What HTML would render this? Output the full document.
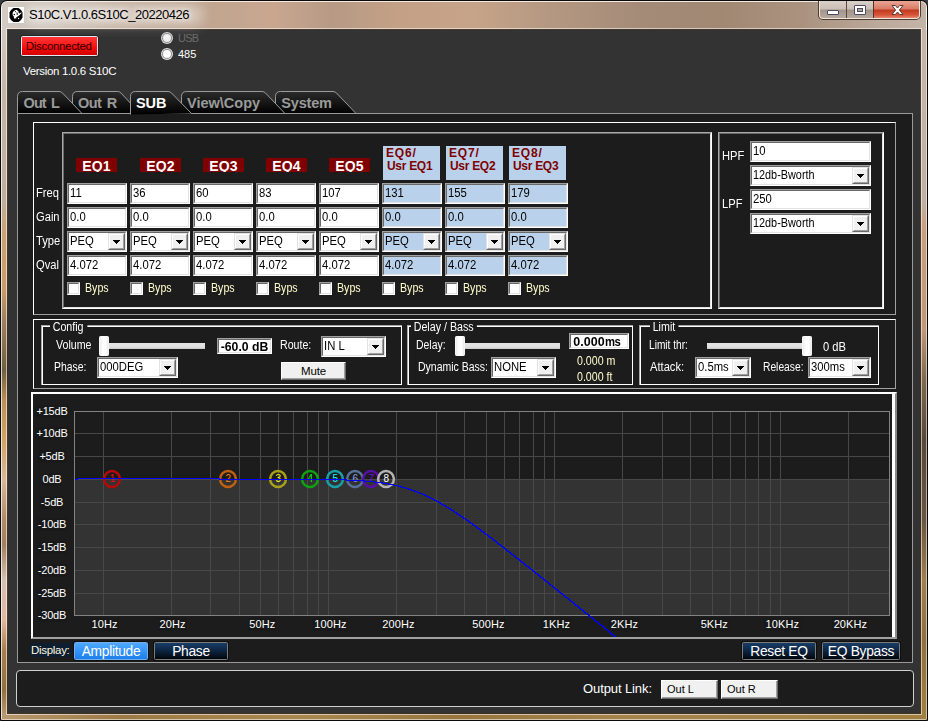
<!DOCTYPE html><html><head><meta charset="utf-8"><title>S10C</title><style>
*{box-sizing:border-box;margin:0;padding:0}
html,body{width:928px;height:721px;overflow:hidden;background:#3c3c40}
body{font-family:"Liberation Sans",sans-serif;font-size:12px;color:#fff;position:relative}
.a{position:absolute}
.t{position:absolute;white-space:nowrap;line-height:1}
/* window frame */
#frame{left:0;top:0;width:928px;height:721px;border-radius:7px 7px 2px 2px;background:#0c0a08;overflow:hidden}
#glass{left:1px;top:1px;width:926px;height:719px;border-radius:6px 6px 1px 1px;background:#f3ebe3}
#glass2{left:2px;top:2px;width:924px;height:717px;border-radius:5px 5px 0 0}
#client{left:8px;top:30px;width:912px;height:683px;background:#333}
/* classic controls */
.inp{position:absolute;background:#fff;border:1px solid;border-color:#a0a0a0 #fff #fff #a0a0a0;color:#000}
.inp:before{content:"";position:absolute;left:0;top:0;right:0;bottom:0;border:1px solid;border-color:#696969 #e3e3e3 #e3e3e3 #696969}
.inp span{position:absolute;left:2px;top:3px;font-size:12px;line-height:1;white-space:nowrap;transform:scaleX(.94);transform-origin:0 0}
.blue{background:#b9d1ea}
.dd{position:absolute;right:1px;top:1px;width:17px;height:17px;background:#f0f0f0;border:1px solid;border-color:#e3e3e3 #696969 #696969 #e3e3e3}
.dd:before{content:"";position:absolute;left:0;top:0;right:0;bottom:0;border:1px solid;border-color:#fff #a0a0a0 #a0a0a0 #fff}
.dd:after{content:"";position:absolute;left:4px;top:6px;width:7px;height:4px;background:linear-gradient(#000,#000) 0 0/7px 1px no-repeat,linear-gradient(#000,#000) 1px 1px/5px 1px no-repeat,linear-gradient(#000,#000) 2px 2px/3px 1px no-repeat,linear-gradient(#000,#000) 3px 3px/1px 1px no-repeat}
.cb{position:absolute;width:13px;height:13px;background:#fff;border:1px solid;border-color:#a0a0a0 #fff #fff #a0a0a0}
.cb:before{content:"";position:absolute;left:0;top:0;right:0;bottom:0;border:1px solid;border-color:#696969 #e3e3e3 #e3e3e3 #696969}
.lbl{font-size:12px;color:#fff;transform:scaleX(.93);transform-origin:0 0}
.byps{font-size:12px;color:#ffffd0;transform:scaleX(.885);transform-origin:0 0}
.eqh{position:absolute;background:#800000;color:#fff;font-weight:bold;font-size:14px;text-align:center;line-height:16px;height:14px;overflow:hidden;letter-spacing:0.1px}
.eqh2{position:absolute;background:#b9d1ea;color:#800000;font-weight:bold;font-size:12px;line-height:13px;width:57px;height:34px;padding:1px 0 0 3px;white-space:nowrap;letter-spacing:0.85px}
.eqh2 i{font-style:normal;letter-spacing:-0.3px;margin-left:1px}
.inp u{text-decoration:none;font-size:12px;letter-spacing:-0.8px;margin-left:0.5px}
.fs{position:absolute;border:1px solid #a8a8a8}
.fs:before{content:"";position:absolute;left:0;top:0;right:-1px;bottom:-1px;border:1px solid #fff}
.fs b{position:absolute;top:-5px;background:#1c1c1c;font-weight:normal;font-size:12px;line-height:12px;padding:0 4px 0 3px;z-index:2;transform:scaleX(.89);transform-origin:0 0}
</style></head><body>
<div id="frame" class="a"></div><div id="glass" class="a"></div>
<div id="glass2" class="a" style="background:linear-gradient(90deg,#d3cbc4 0px,#c9bdb2 60px,#c0aa99 130px,#bfa590 200px,#c9a78f 270px,#b79a85 330px,#c4a186 400px,#c6a489 470px,#b29680 560px,#a48b78 640px,#a18873 720px,#aa927f 800px,#bcaa9b 880px,#c4b4a8 924px)"></div>
<div class="a" style="left:1px;top:30px;width:7px;height:690px;background:linear-gradient(180deg,#d0c8c0 0,#c4b6a8 60px,#c0ae9c 170px,#c8a478 200px,#c89c68 260px,#a08060 290px,#706040 340px,#b89058 370px,#d0a468 410px,#d8b898 450px,#b08a68 490px,#a08060 515px,#d8c0b0 550px,#e0b8a0 590px,#a88050 620px,#907040 660px,#b89870 685px)"></div>
<div class="a" style="left:920px;top:30px;width:7px;height:690px;background:linear-gradient(180deg,#c6b6aa 0,#c2b0a2 170px,#c8a080 200px,#c09878 300px,#806850 350px,#584838 410px,#6a5540 490px,#a08050 550px,#907040 610px,#a08040 685px)"></div>
<div class="a" style="left:1px;top:713px;width:926px;height:7px;background:linear-gradient(90deg,#b89870 0,#9c7a45 120px,#a98850 300px,#97753f 460px,#a5844c 620px,#a38147 800px,#a08040 924px)"></div>
<div class="a" style="left:1px;top:8px;width:1px;height:711px;background:rgba(255,255,255,.72)"></div>
<div class="a" style="left:926px;top:8px;width:1px;height:711px;background:rgba(255,255,255,.55)"></div>
<div class="a" style="left:2px;top:719px;width:924px;height:1px;background:rgba(255,255,255,.55)"></div>
<div class="a" style="left:6px;top:28px;width:916px;height:687px;background:transparent;border:1px solid rgba(255,255,255,.55)"></div>
<div class="a" style="left:7px;top:29px;width:914px;height:685px;background:transparent;border:1px solid rgba(40,30,20,.8)"></div>
<div id="client" class="a"></div>
<div class="a" style="left:26px;top:4px;width:178px;height:22px;border-radius:11px;background:rgba(255,255,255,.38);filter:blur(6px)"></div>
<svg class="a" style="left:8px;top:7px" width="16" height="16" viewBox="0 0 16 16"><rect width="16" height="16" fill="#fff"/><path d="M5.500 1h5l2.500 2 1.500 2.500v5L13 13l-2.500 2h-5L3 13 1.500 10.500v-5L3 3z" fill="#000"/><path d="M8.500 2.800l1.800 1.400.7 2.200 2.600-1.100-.2.900-1.800 1.700-1.500 1.400-1.600 1-1.200 1.500-1.200-.2-.3-2.200-1.200-1.500V5.700l1-1.500 1.500-1z" fill="#fff"/><circle cx="7.400" cy="4.600" r=".55" fill="#000"/><circle cx="6.300" cy="7.500" r=".7" fill="#000"/><path d="M8.600 5.300l1.100.4.100 1.900-1 .3z" fill="#000"/><circle cx="10.600" cy="11.500" r=".65" fill="#fff"/><circle cx="8.300" cy="11.600" r=".35" fill="#999"/></svg>
<div class="t" style="left:29px;top:8px;font-size:13px;color:#000;letter-spacing:-0.47px;text-shadow:0 0 6px #fff,0 0 10px rgba(255,255,255,.8)">S10C.V1.0.6S10C_20220426</div>
<div class="a" style="left:818px;top:1px;width:103px;height:19px;border-radius:0 0 5px 5px;background:#4a3c32"></div>
<div class="a" style="left:819px;top:1px;width:101px;height:18px;border-radius:0 0 4px 4px;background:#f2e6dc"></div>
<div class="a" style="left:820px;top:1px;width:26px;height:17px;border-radius:0 0 0 3px;background:linear-gradient(180deg,#d9d0c9 0,#cbbfb6 8px,#a4958a 9px,#b6a89c 17px)"></div>
<div class="a" style="left:847px;top:1px;width:26px;height:17px;background:linear-gradient(180deg,#d9d0c9 0,#cbbfb6 8px,#a4958a 9px,#b6a89c 17px)"></div>
<div class="a" style="left:846px;top:1px;width:1px;height:17px;background:#5a4a40"></div>
<div class="a" style="left:873px;top:1px;width:1px;height:17px;background:#5a3028"></div>
<div class="a" style="left:874px;top:1px;width:45px;height:17px;border-radius:0 0 3px 0;background:linear-gradient(180deg,#e9a593 0,#d97b66 8px,#c13a20 9px,#d8553a 14px,#e4876c 17px)"></div>
<div class="a" style="left:827px;top:10px;width:12px;height:5px;background:#fff;border:1px solid #4a4a60;border-radius:1px"></div>
<div class="a" style="left:854px;top:5px;width:12px;height:10px;background:#fff;border:1px solid #4a4a60;border-radius:1px"></div>
<div class="a" style="left:857px;top:8px;width:6px;height:4px;background:#b4a59a;border:1px solid #4a4a60"></div>
<svg class="a" style="left:891px;top:4px" width="13" height="12" viewBox="0 0 13 12"><path d="M1 1.500h3.400L6.500 4 8.600 1.500H12L8.400 6 12 10.500H8.600L6.500 8 4.400 10.500H1L4.600 6z" fill="#fff" stroke="#5c3838" stroke-width="1" stroke-linejoin="round"/></svg>
<div class="a" style="left:20px;top:35px;width:79px;height:22px;background:#242424;border-radius:3px"></div>
<div class="a" style="left:21px;top:36px;width:77px;height:20px;background:#dfe8f4;border-radius:2px"></div>
<div class="a" style="left:22px;top:37px;width:75px;height:18px;background:linear-gradient(180deg,#ff3434 0,#ff2020 35%,#f40808 65%,#d40000 100%)"></div>
<div class="t" style="left:25.8px;top:41px;font-size:11.5px;color:#2c0000;letter-spacing:-0.32px">Disconnected</div>
<div class="t" style="left:23px;top:66px;font-size:11.5px;color:#fff;letter-spacing:-0.33px">Version 1.0.6 S10C</div>
<div class="a" style="left:161px;top:32px;width:12px;height:12px;border-radius:6px;background:#d6d6d6"></div>
<div class="a" style="left:162px;top:33px;width:10px;height:10px;border-radius:5px;background:#8c8c8c"></div>
<div class="a" style="left:163px;top:34px;width:8px;height:8px;border-radius:4px;background:radial-gradient(circle at 45% 40%,#f6f6f6 0,#ececec 60%,#dadada 100%)"></div>
<div class="t" style="left:178px;top:33px;font-size:11px;color:#6d6d6d;letter-spacing:-0.75px">USB</div>
<div class="a" style="left:161px;top:48px;width:12px;height:12px;border-radius:6px;background:#e2e2e2"></div>
<div class="a" style="left:162px;top:49px;width:10px;height:10px;border-radius:5px;background:#8e8e8e"></div>
<div class="a" style="left:163px;top:50px;width:8px;height:8px;border-radius:4px;background:radial-gradient(circle at 45% 40%,#fff 0,#fdfdfd 60%,#e8e8e8 100%)"></div>
<div class="t" style="left:178px;top:49px;font-size:11px;color:#fff;letter-spacing:0px">485</div>
<div class="a" style="left:17px;top:113px;width:896px;height:550px;background:#1c1c1c;border:1px solid #9a9a9a"></div>
<svg class="a" style="left:0;top:0" width="928" height="130"><defs><linearGradient id="tg275" x1="0" y1="0" x2="0" y2="1"><stop offset="0" stop-color="#2c2c2c"/><stop offset="1" stop-color="#000"/></linearGradient></defs><path d="M275.5 113.5 V96.5 Q275.5 91.5 280.5 91.5 H333.0 Q335.0 91.5 336.5 93.0 L356.0 113.5 L275.5 113.5 Z" fill="url(#tg275)" stroke="none"/><path d="M275.5 113.5 V96.5 Q275.5 91.5 280.5 91.5 H333.0 Q335.0 91.5 336.5 93.0 L356.0 113.5" fill="none" stroke="#9a9a9a" stroke-width="1"/><path d="M275.5 113.5 H356.0" stroke="#9a9a9a" stroke-width="1"/></svg>
<div class="t" style="left:281.3px;top:96px;font-size:14.5px;font-weight:bold;color:#9a9a9a;letter-spacing:-0.20px;word-spacing:0.0px">System</div>
<svg class="a" style="left:0;top:0" width="928" height="130"><defs><linearGradient id="tg181" x1="0" y1="0" x2="0" y2="1"><stop offset="0" stop-color="#2c2c2c"/><stop offset="1" stop-color="#000"/></linearGradient></defs><path d="M181.5 113.5 V96.5 Q181.5 91.5 186.5 91.5 H262.0 Q264.0 91.5 265.5 93.0 L285.0 113.5 L181.5 113.5 Z" fill="url(#tg181)" stroke="none"/><path d="M181.5 113.5 V96.5 Q181.5 91.5 186.5 91.5 H262.0 Q264.0 91.5 265.5 93.0 L285.0 113.5" fill="none" stroke="#9a9a9a" stroke-width="1"/><path d="M181.5 113.5 H285.0" stroke="#9a9a9a" stroke-width="1"/></svg>
<div class="t" style="left:187.0px;top:96px;font-size:14.5px;font-weight:bold;color:#9a9a9a;letter-spacing:0.00px;word-spacing:0.0px">View\Copy</div>
<svg class="a" style="left:0;top:0" width="928" height="130"><defs><linearGradient id="tg72" x1="0" y1="0" x2="0" y2="1"><stop offset="0" stop-color="#2c2c2c"/><stop offset="1" stop-color="#000"/></linearGradient></defs><path d="M72.5 113.5 V96.5 Q72.5 91.5 77.5 91.5 H117.5 Q119.5 91.5 121.0 93.0 L140.0 113.5 L72.5 113.5 Z" fill="url(#tg72)" stroke="none"/><path d="M72.5 113.5 V96.5 Q72.5 91.5 77.5 91.5 H117.5 Q119.5 91.5 121.0 93.0 L140.0 113.5" fill="none" stroke="#9a9a9a" stroke-width="1"/><path d="M72.5 113.5 H140.0" stroke="#9a9a9a" stroke-width="1"/></svg>
<div class="t" style="left:78.0px;top:96px;font-size:14.5px;font-weight:bold;color:#9a9a9a;letter-spacing:-0.55px;word-spacing:2.0px">Out R</div>
<svg class="a" style="left:0;top:0" width="928" height="130"><defs><linearGradient id="tg17" x1="0" y1="0" x2="0" y2="1"><stop offset="0" stop-color="#2c2c2c"/><stop offset="1" stop-color="#000"/></linearGradient></defs><path d="M17.5 113.5 V96.5 Q17.5 91.5 22.5 91.5 H59.0 Q61.0 91.5 62.5 93.0 L82.0 113.5 L17.5 113.5 Z" fill="url(#tg17)" stroke="none"/><path d="M17.5 113.5 V96.5 Q17.5 91.5 22.5 91.5 H59.0 Q61.0 91.5 62.5 93.0 L82.0 113.5" fill="none" stroke="#9a9a9a" stroke-width="1"/><path d="M17.5 113.5 H82.0" stroke="#9a9a9a" stroke-width="1"/></svg>
<div class="t" style="left:23.5px;top:96px;font-size:14.5px;font-weight:bold;color:#9a9a9a;letter-spacing:-0.90px;word-spacing:2.0px">Out L</div>
<svg class="a" style="left:0;top:0" width="928" height="130"><defs><linearGradient id="tg130" x1="0" y1="0" x2="0" y2="1"><stop offset="0" stop-color="#2c2c2c"/><stop offset="1" stop-color="#000"/></linearGradient></defs><path d="M130.5 114.5 V96.5 Q130.5 91.5 135.5 91.5 H168.0 Q170.0 91.5 171.5 93.0 L191.5 113.5 L130.5 114.5 Z" fill="url(#tg130)" stroke="none"/><path d="M130.5 114.5 V96.5 Q130.5 91.5 135.5 91.5 H168.0 Q170.0 91.5 171.5 93.0 L191.5 113.5" fill="none" stroke="#9a9a9a" stroke-width="1"/></svg>
<div class="t" style="left:136.0px;top:96px;font-size:14.5px;font-weight:bold;color:#fff;letter-spacing:-0.10px;word-spacing:0.0px">SUB</div>
<div class="a" style="left:33px;top:122px;width:863px;height:193px;border:1px solid;border-color:#fff #a0a0a0 #a0a0a0 #fff"></div>
<div class="a" style="left:62px;top:132px;width:650px;height:177px;border:1px solid;border-color:#a8a8a8 #fff #fff #a8a8a8"></div>
<div class="a" style="left:63px;top:133px;width:648px;height:175px;border:1px solid;border-color:#696969 #e3e3e3 #e3e3e3 #696969"></div>
<div class="a" style="left:718px;top:132px;width:166px;height:177px;border:1px solid;border-color:#a8a8a8 #fff #fff #a8a8a8"></div>
<div class="a" style="left:719px;top:133px;width:164px;height:175px;border:1px solid;border-color:#696969 #e3e3e3 #e3e3e3 #696969"></div>
<div class="t lbl" style="left:36px;top:187px">Freq</div>
<div class="t lbl" style="left:36px;top:211px">Gain</div>
<div class="t lbl" style="left:36px;top:235px">Type</div>
<div class="t lbl" style="left:36px;top:259px">Qval</div>
<div class="eqh" style="left:76px;top:158px;width:41px">EQ1</div>
<div class="inp" style="left:67px;top:183px;width:60px;height:21px"><span>11</span></div>
<div class="inp" style="left:67px;top:207px;width:60px;height:21px"><span>0.0</span></div>
<div class="inp" style="left:67px;top:231px;width:60px;height:21px"><span>PEQ</span><i class="dd"></i></div>
<div class="inp" style="left:67px;top:255px;width:60px;height:21px"><span>4.072</span></div>
<div class="cb" style="left:67px;top:282px"></div>
<div class="t byps" style="left:85px;top:282px">Byps</div>
<div class="eqh" style="left:140px;top:158px;width:41px">EQ2</div>
<div class="inp" style="left:130px;top:183px;width:60px;height:21px"><span>36</span></div>
<div class="inp" style="left:130px;top:207px;width:60px;height:21px"><span>0.0</span></div>
<div class="inp" style="left:130px;top:231px;width:60px;height:21px"><span>PEQ</span><i class="dd"></i></div>
<div class="inp" style="left:130px;top:255px;width:60px;height:21px"><span>4.072</span></div>
<div class="cb" style="left:130px;top:282px"></div>
<div class="t byps" style="left:148px;top:282px">Byps</div>
<div class="eqh" style="left:203px;top:158px;width:41px">EQ3</div>
<div class="inp" style="left:193px;top:183px;width:60px;height:21px"><span>60</span></div>
<div class="inp" style="left:193px;top:207px;width:60px;height:21px"><span>0.0</span></div>
<div class="inp" style="left:193px;top:231px;width:60px;height:21px"><span>PEQ</span><i class="dd"></i></div>
<div class="inp" style="left:193px;top:255px;width:60px;height:21px"><span>4.072</span></div>
<div class="cb" style="left:193px;top:282px"></div>
<div class="t byps" style="left:211px;top:282px">Byps</div>
<div class="eqh" style="left:266px;top:158px;width:41px">EQ4</div>
<div class="inp" style="left:256px;top:183px;width:60px;height:21px"><span>83</span></div>
<div class="inp" style="left:256px;top:207px;width:60px;height:21px"><span>0.0</span></div>
<div class="inp" style="left:256px;top:231px;width:60px;height:21px"><span>PEQ</span><i class="dd"></i></div>
<div class="inp" style="left:256px;top:255px;width:60px;height:21px"><span>4.072</span></div>
<div class="cb" style="left:256px;top:282px"></div>
<div class="t byps" style="left:274px;top:282px">Byps</div>
<div class="eqh" style="left:329px;top:158px;width:41px">EQ5</div>
<div class="inp" style="left:319px;top:183px;width:60px;height:21px"><span>107</span></div>
<div class="inp" style="left:319px;top:207px;width:60px;height:21px"><span>0.0</span></div>
<div class="inp" style="left:319px;top:231px;width:60px;height:21px"><span>PEQ</span><i class="dd"></i></div>
<div class="inp" style="left:319px;top:255px;width:60px;height:21px"><span>4.072</span></div>
<div class="cb" style="left:319px;top:282px"></div>
<div class="t byps" style="left:337px;top:282px">Byps</div>
<div class="eqh2" style="left:383px;top:146px">EQ6/<br><i>Usr EQ1</i></div>
<div class="inp blue" style="left:382px;top:183px;width:60px;height:21px"><span>131</span></div>
<div class="inp blue" style="left:382px;top:207px;width:60px;height:21px"><span>0.0</span></div>
<div class="inp blue" style="left:382px;top:231px;width:60px;height:21px"><span>PEQ</span><i class="dd"></i></div>
<div class="inp blue" style="left:382px;top:255px;width:60px;height:21px"><span>4.072</span></div>
<div class="cb" style="left:382px;top:282px"></div>
<div class="t byps" style="left:400px;top:282px">Byps</div>
<div class="eqh2" style="left:446px;top:146px">EQ7/<br><i>Usr EQ2</i></div>
<div class="inp blue" style="left:445px;top:183px;width:60px;height:21px"><span>155</span></div>
<div class="inp blue" style="left:445px;top:207px;width:60px;height:21px"><span>0.0</span></div>
<div class="inp blue" style="left:445px;top:231px;width:60px;height:21px"><span>PEQ</span><i class="dd"></i></div>
<div class="inp blue" style="left:445px;top:255px;width:60px;height:21px"><span>4.072</span></div>
<div class="cb" style="left:445px;top:282px"></div>
<div class="t byps" style="left:463px;top:282px">Byps</div>
<div class="eqh2" style="left:509px;top:146px">EQ8/<br><i>Usr EQ3</i></div>
<div class="inp blue" style="left:508px;top:183px;width:60px;height:21px"><span>179</span></div>
<div class="inp blue" style="left:508px;top:207px;width:60px;height:21px"><span>0.0</span></div>
<div class="inp blue" style="left:508px;top:231px;width:60px;height:21px"><span>PEQ</span><i class="dd"></i></div>
<div class="inp blue" style="left:508px;top:255px;width:60px;height:21px"><span>4.072</span></div>
<div class="cb" style="left:508px;top:282px"></div>
<div class="t byps" style="left:526px;top:282px">Byps</div>
<div class="t lbl" style="left:722px;top:150px">HPF</div>
<div class="t lbl" style="left:722px;top:198px">LPF</div>
<div class="inp" style="left:750px;top:141px;width:121px;height:21px"><span>10</span></div>
<div class="inp" style="left:750px;top:165px;width:121px;height:21px"><span style="transform:scaleX(.905)">12db-Bworth</span><i class="dd"></i></div>
<div class="inp" style="left:750px;top:189px;width:121px;height:21px"><span>250</span></div>
<div class="inp" style="left:750px;top:213px;width:121px;height:21px"><span style="transform:scaleX(.905)">12db-Bworth</span><i class="dd"></i></div>
<div class="a" style="left:33px;top:319px;width:863px;height:70px;border:1px solid;border-color:#fff #a0a0a0 #a0a0a0 #fff"></div>
<div class="fs" style="left:41px;top:325px;width:361px;height:60px"><b style="left:8px">Config</b></div>
<div class="fs" style="left:407px;top:325px;width:226px;height:60px"><b style="left:3px">Delay / Bass</b></div>
<div class="fs" style="left:639px;top:325px;width:240px;height:60px"><b style="left:10px">Limit</b></div>
<div class="t lbl" style="left:56px;top:339px;transform:scaleX(0.885)">Volume</div>
<div class="a" style="left:104px;top:343px;width:101px;height:6px;background:linear-gradient(180deg,#e4e4e4 0,#e0e0e0 4px,#c8c8c8 6px)"></div>
<div class="a" style="left:99px;top:336px;width:10px;height:20px;border-radius:2px;background:linear-gradient(90deg,#e8e8e8 0,#fff 40%,#fff 70%,#dcdcdc 100%);box-shadow:inset 0 0 0 1px rgba(255,255,255,.6)"></div>
<div class="inp" style="left:217px;top:338px;width:55px;height:16px"><span style="left:0;right:0;top:1px;text-align:center;font-weight:bold;font-size:13.0px;letter-spacing:0;transform:scaleX(.94);transform-origin:50% 0">-60.0 dB</span></div>
<div class="t lbl" style="left:280px;top:339px;transform:scaleX(0.885)">Route:</div>
<div class="inp" style="left:321px;top:336px;width:65px;height:21px"><span>IN L</span><i class="dd"></i></div>
<div class="t lbl" style="left:53.5px;top:361px;transform:scaleX(0.865)">Phase:</div>
<div class="inp" style="left:97px;top:357px;width:81px;height:21px"><span>000DEG</span><i class="dd"></i></div>
<div class="a" style="left:281px;top:362px;width:65px;height:18px;background:#f0f0f0;border:1px solid;border-color:#fff #696969 #696969 #fff;color:#000;font-size:11.5px;line-height:16px;text-align:center;letter-spacing:-0.2px;box-shadow:inset -1px -1px 0 #a0a0a0">Mute</div>
<div class="t lbl" style="left:416px;top:339px;transform:scaleX(0.87)">Delay:</div>
<div class="a" style="left:461px;top:343px;width:99px;height:6px;background:linear-gradient(180deg,#e4e4e4 0,#e0e0e0 4px,#c8c8c8 6px)"></div>
<div class="a" style="left:455px;top:336px;width:10px;height:20px;border-radius:2px;background:linear-gradient(90deg,#e8e8e8 0,#fff 40%,#fff 70%,#dcdcdc 100%);box-shadow:inset 0 0 0 1px rgba(255,255,255,.6)"></div>
<div class="inp" style="left:569px;top:333px;width:60px;height:16px"><span style="left:0;right:0;top:1px;text-align:center;font-weight:bold;font-size:13.3px;letter-spacing:0;transform:scaleX(.94);transform-origin:50% 0">0.000<u>ms</u><i style="display:inline-block;width:5px"></i></span></div>
<div class="t lbl" style="left:418px;top:361px;transform:scaleX(0.875)">Dynamic Bass:</div>
<div class="inp" style="left:491px;top:357px;width:65px;height:21px"><span>NONE</span><i class="dd"></i></div>
<div class="t byps" style="left:577px;top:355px">0.000 m</div>
<div class="t byps" style="left:577px;top:371px">0.000 ft</div>
<div class="t lbl" style="left:649px;top:339px;transform:scaleX(0.845)">Limit thr:</div>
<div class="a" style="left:707px;top:343px;width:96px;height:6px;background:linear-gradient(180deg,#e4e4e4 0,#e0e0e0 4px,#c8c8c8 6px)"></div>
<div class="a" style="left:802px;top:336px;width:10px;height:20px;border-radius:2px;background:linear-gradient(90deg,#e8e8e8 0,#fff 40%,#fff 70%,#dcdcdc 100%);box-shadow:inset 0 0 0 1px rgba(255,255,255,.6)"></div>
<div class="t lbl" style="left:823px;top:341px">0 dB</div>
<div class="t lbl" style="left:650px;top:361px">Attack:</div>
<div class="inp" style="left:695px;top:357px;width:56px;height:21px"><span>0.5ms</span><i class="dd"></i></div>
<div class="t lbl" style="left:762.5px;top:361px;transform:scaleX(0.855)">Release:</div>
<div class="inp" style="left:808px;top:357px;width:63px;height:21px"><span>300ms</span><i class="dd"></i></div>
<div class="a" style="left:31px;top:392px;width:866px;height:247px;background:#1c1c1c;border:2px solid;border-color:#fff #8a8a8a #a0a0a0 #fff;overflow:hidden" id="gpanel">
<div class="a" style="right:0;top:0;width:3px;height:245px;background:#fff;z-index:5"></div>
<svg class="a" style="left:0;top:0" width="860" height="244" viewBox="33 394 860 244" shape-rendering="crispEdges"><rect x="74" y="480" width="816" height="136" fill="#333"/><rect x="103" y="411" width="1" height="204" fill="#484848"/><rect x="171" y="411" width="1" height="204" fill="#484848"/><rect x="210" y="411" width="1" height="204" fill="#484848"/><rect x="239" y="411" width="1" height="204" fill="#484848"/><rect x="260" y="411" width="1" height="204" fill="#484848"/><rect x="278" y="411" width="1" height="204" fill="#484848"/><rect x="293" y="411" width="1" height="204" fill="#484848"/><rect x="307" y="411" width="1" height="204" fill="#484848"/><rect x="318" y="411" width="1" height="204" fill="#484848"/><rect x="328" y="411" width="1" height="204" fill="#484848"/><rect x="396" y="411" width="1" height="204" fill="#484848"/><rect x="436" y="411" width="1" height="204" fill="#484848"/><rect x="464" y="411" width="1" height="204" fill="#484848"/><rect x="486" y="411" width="1" height="204" fill="#484848"/><rect x="504" y="411" width="1" height="204" fill="#484848"/><rect x="519" y="411" width="1" height="204" fill="#484848"/><rect x="533" y="411" width="1" height="204" fill="#484848"/><rect x="544" y="411" width="1" height="204" fill="#484848"/><rect x="554" y="411" width="1" height="204" fill="#484848"/><rect x="622" y="411" width="1" height="204" fill="#484848"/><rect x="662" y="411" width="1" height="204" fill="#484848"/><rect x="690" y="411" width="1" height="204" fill="#484848"/><rect x="712" y="411" width="1" height="204" fill="#484848"/><rect x="730" y="411" width="1" height="204" fill="#484848"/><rect x="745" y="411" width="1" height="204" fill="#484848"/><rect x="758" y="411" width="1" height="204" fill="#484848"/><rect x="770" y="411" width="1" height="204" fill="#484848"/><rect x="780" y="411" width="1" height="204" fill="#484848"/><rect x="848" y="411" width="1" height="204" fill="#484848"/><rect x="74" y="433" width="815" height="1" fill="#484848"/><rect x="74" y="456" width="815" height="1" fill="#484848"/><rect x="74" y="479" width="815" height="1" fill="#484848"/><rect x="74" y="502" width="815" height="1" fill="#484848"/><rect x="74" y="524" width="815" height="1" fill="#484848"/><rect x="74" y="547" width="815" height="1" fill="#484848"/><rect x="74" y="570" width="815" height="1" fill="#484848"/><rect x="74" y="593" width="815" height="1" fill="#484848"/><rect x="74.5" y="411.5" width="815" height="204" fill="none" stroke="#828282" stroke-width="1"/></svg>
<svg class="a" style="left:0;top:0" width="860" height="244" viewBox="33 394 860 244"><circle cx="112" cy="479" r="7.9" fill="none" stroke="#b80808" stroke-width="2.5"/><text x="112.4" y="482.3" font-family="Liberation Sans, sans-serif" font-size="10" text-anchor="middle" fill="#ff0000">1</text><circle cx="228" cy="479" r="7.9" fill="none" stroke="#c06010" stroke-width="2.5"/><text x="228.4" y="482.3" font-family="Liberation Sans, sans-serif" font-size="10" text-anchor="middle" fill="#ff8000">2</text><circle cx="278" cy="479" r="7.9" fill="none" stroke="#a8a018" stroke-width="2.5"/><text x="278.4" y="482.3" font-family="Liberation Sans, sans-serif" font-size="10" text-anchor="middle" fill="#ffff00">3</text><circle cx="310" cy="479" r="7.9" fill="none" stroke="#10a010" stroke-width="2.5"/><text x="310.4" y="482.3" font-family="Liberation Sans, sans-serif" font-size="10" text-anchor="middle" fill="#00ff00">4</text><circle cx="335" cy="479" r="7.9" fill="none" stroke="#18a0a8" stroke-width="2.5"/><text x="335.4" y="482.3" font-family="Liberation Sans, sans-serif" font-size="10" text-anchor="middle" fill="#00ffff">5</text><circle cx="355" cy="479" r="7.9" fill="none" stroke="#58709a" stroke-width="2.5"/><text x="355.4" y="482.3" font-family="Liberation Sans, sans-serif" font-size="10" text-anchor="middle" fill="#88a8e8">6</text><circle cx="371" cy="479" r="7.9" fill="none" stroke="#5810a8" stroke-width="2.5"/><text x="371.4" y="482.3" font-family="Liberation Sans, sans-serif" font-size="10" text-anchor="middle" fill="#8000ff">7</text><circle cx="386" cy="479" r="7.9" fill="none" stroke="#b4b4b4" stroke-width="2.5"/><text x="386.4" y="482.3" font-family="Liberation Sans, sans-serif" font-size="10" text-anchor="middle" fill="#ffffff">8</text><path d="M75 479.5 L77 479.5 L77 478.5 L78.0 478.5 L79.0 478.5 L80.0 478.5 L81.0 478.5 L82.0 478.5 L83.0 478.5 L84.0 478.5 L85.0 478.5 L86.0 478.5 L87.0 478.5 L88.0 478.5 L89.0 478.5 L90.0 478.5 L91.0 478.5 L92.0 478.5 L93.0 478.5 L94.0 478.5 L95.0 478.5 L96.0 478.5 L97.0 478.5 L98.0 478.5 L99.0 478.5 L100.0 478.5 L101.0 478.5 L102.0 478.5 L103.0 478.5 L104.0 478.5 L105.0 478.5 L106.0 478.5 L107.0 478.5 L108.0 478.5 L109.0 478.5 L110.0 478.5 L111.0 478.5 L112.0 478.5 L113.0 478.5 L114.0 478.5 L115.0 478.5 L116.0 478.5 L117.0 478.5 L118.0 478.5 L119.0 478.5 L120.0 478.5 L121.0 478.5 L122.0 478.5 L123.0 478.5 L124.0 478.5 L125.0 478.5 L126.0 478.5 L127.0 478.5 L128.0 478.5 L129.0 478.5 L130.0 478.5 L131.0 478.5 L132.0 478.5 L133.0 478.5 L134.0 478.5 L135.0 478.5 L136.0 478.5 L137.0 478.5 L138.0 478.5 L139.0 478.5 L140.0 478.5 L141.0 478.5 L142.0 478.5 L143.0 478.5 L144.0 478.5 L145.0 478.5 L146.0 478.5 L147.0 478.5 L148.0 478.5 L149.0 478.5 L150.0 478.5 L151.0 478.5 L152.0 478.5 L153.0 478.5 L154.0 478.5 L155.0 478.5 L156.0 478.5 L157.0 478.5 L158.0 478.5 L159.0 478.5 L160.0 478.5 L161.0 478.5 L162.0 478.5 L163.0 478.5 L164.0 478.5 L165.0 478.5 L166.0 478.5 L167.0 478.5 L168.0 478.5 L169.0 478.5 L170.0 478.5 L171.0 478.5 L172.0 478.5 L173.0 478.5 L174.0 478.5 L175.0 478.5 L176.0 478.5 L177.0 478.5 L178.0 478.5 L179.0 478.5 L180.0 478.5 L181.0 478.5 L182.0 478.5 L183.0 478.5 L184.0 478.5 L185.0 478.5 L186.0 478.5 L187.0 478.5 L188.0 478.5 L189.0 478.5 L190.0 478.5 L191.0 478.5 L192.0 478.5 L193.0 478.5 L194.0 478.5 L195.0 478.5 L196.0 478.5 L197.0 478.5 L198.0 478.5 L199.0 478.5 L200.0 478.5 L201.0 478.5 L202.0 478.5 L203.0 478.5 L204.0 478.5 L205.0 478.5 L206.0 478.5 L207.0 478.5 L208.0 478.5 L209.0 478.5 L210.0 478.5 L211.0 478.5 L212.0 478.5 L213.0 478.5 L214.0 478.5 L215.0 478.5 L216.0 478.5 L217.0 478.5 L218.0 478.5 L219.0 478.5 L220.0 479.5 L221.0 479.5 L222.0 479.5 L223.0 479.5 L224.0 479.5 L225.0 479.5 L226.0 479.5 L227.0 479.5 L228.0 479.5 L229.0 479.5 L230.0 479.5 L231.0 479.5 L232.0 479.5 L233.0 479.5 L234.0 479.5 L235.0 479.5 L236.0 479.5 L237.0 479.5 L238.0 479.5 L239.0 479.5 L240.0 479.5 L241.0 479.5 L242.0 479.5 L243.0 479.5 L244.0 479.5 L245.0 479.5 L246.0 479.5 L247.0 479.5 L248.0 479.5 L249.0 479.5 L250.0 479.5 L251.0 479.5 L252.0 479.5 L253.0 479.5 L254.0 479.5 L255.0 479.5 L256.0 479.5 L257.0 479.5 L258.0 479.5 L259.0 479.5 L260.0 479.5 L261.0 479.5 L262.0 479.5 L263.0 479.5 L264.0 479.5 L265.0 479.5 L266.0 479.5 L267.0 479.5 L268.0 479.5 L269.0 479.5 L270.0 479.5 L271.0 479.5 L272.0 479.5 L273.0 479.5 L274.0 479.5 L275.0 479.5 L276.0 479.5 L277.0 479.5 L278.0 479.5 L279.0 479.5 L280.0 479.5 L281.0 479.5 L282.0 479.5 L283.0 479.5 L284.0 479.5 L285.0 479.5 L286.0 479.5 L287.0 479.5 L288.0 479.5 L289.0 479.5 L290.0 479.5 L291.0 479.5 L292.0 479.5 L293.0 479.5 L294.0 479.5 L295.0 479.5 L296.0 479.5 L297.0 479.5 L298.0 479.5 L299.0 479.5 L300.0 479.5 L301.0 479.5 L302.0 479.5 L303.0 479.5 L304.0 479.5 L305.0 479.5 L306.0 479.5 L307.0 479.5 L308.0 479.5 L309.0 479.5 L310.0 479.5 L311.0 479.5 L312.0 479.5 L313.0 479.5 L314.0 479.5 L315.0 479.5 L316.0 479.5 L317.0 479.5 L318.0 479.5 L319.0 479.5 L320.0 479.5 L321.0 479.5 L322.0 479.5 L323.0 479.5 L324.0 479.5 L325.0 479.5 L326.0 479.5 L327.0 479.5 L328.0 479.5 L329.0 479.5 L330.0 479.5 L331.0 479.5 L332.0 479.5 L333.0 479.5 L334.0 479.5 L335.0 479.5 L336.0 479.5 L337.0 479.5 L338.0 479.5 L339.0 479.5 L340.0 479.5 L341.0 479.5 L342.0 479.5 L343.0 479.5 L344.0 479.5 L345.0 479.5 L346.0 479.5 L347.0 480.5 L348.0 480.5 L349.0 480.5 L350.0 480.5 L351.0 480.5 L352.0 480.5 L353.0 480.5 L354.0 480.5 L355.0 480.5 L356.0 480.5 L357.0 480.5 L358.0 480.5 L359.0 480.5 L360.0 480.5 L361.0 480.5 L362.0 480.5 L363.0 480.5 L364.0 480.5 L365.0 481.5 L366.0 481.5 L367.0 481.5 L368.0 481.5 L369.0 481.5 L370.0 481.5 L371.0 481.5 L372.0 481.5 L373.0 481.5 L374.0 481.5 L375.0 482.5 L376.0 482.5 L377.0 482.5 L378.0 482.5 L379.0 482.5 L380.0 482.5 L381.0 482.5 L382.0 482.5 L383.0 483.5 L384.0 483.5 L385.0 483.5 L386.0 483.5 L387.0 483.5 L388.0 483.5 L389.0 484.5 L390.0 484.5 L391.0 484.5 L392.0 484.5 L393.0 484.5 L394.0 485.5 L395.0 485.5 L396.0 485.5 L397.0 485.5 L398.0 485.5 L399.0 486.5 L400.0 486.5 L401.0 486.5 L402.0 487.5 L403.0 487.5 L404.0 487.5 L405.0 487.5 L406.0 488.5 L407.0 488.5 L408.0 488.5 L409.0 489.5 L410.0 489.5 L411.0 489.5 L412.0 490.5 L413.0 490.5 L414.0 490.5 L415.0 491.5 L416.0 491.5 L417.0 491.5 L418.0 492.5 L419.0 492.5 L420.0 493.5 L421.0 493.5 L422.0 493.5 L423.0 494.5 L424.0 494.5 L425.0 495.5 L426.0 495.5 L427.0 496.5 L428.0 496.5 L429.0 497.5 L430.0 497.5 L431.0 498.5 L432.0 498.5 L433.0 499.5 L434.0 499.5 L435.0 500.5 L436.0 500.5 L437.0 501.5 L438.0 501.5 L439.0 502.5 L440.0 502.5 L441.0 503.5 L442.0 504.5 L443.0 504.5 L444.0 505.5 L445.0 505.5 L446.0 506.5 L447.0 507.5 L448.0 507.5 L449.0 508.5 L450.0 508.5 L451.0 509.5 L452.0 510.5 L453.0 510.5 L454.0 511.5 L455.0 512.5 L456.0 512.5 L457.0 513.5 L458.0 514.5 L459.0 514.5 L460.0 515.5 L461.0 516.5 L462.0 516.5 L463.0 517.5 L464.0 518.5 L465.0 518.5 L466.0 519.5 L467.0 520.5 L468.0 520.5 L469.0 521.5 L470.0 522.5 L471.0 523.5 L472.0 523.5 L473.0 524.5 L474.0 525.5 L475.0 525.5 L476.0 526.5 L477.0 527.5 L478.0 528.5 L479.0 528.5 L480.0 529.5 L481.0 530.5 L482.0 531.5 L483.0 531.5 L484.0 532.5 L485.0 533.5 L486.0 534.5 L487.0 534.5 L488.0 535.5 L489.0 536.5 L490.0 537.5 L491.0 537.5 L492.0 538.5 L493.0 539.5 L494.0 540.5 L495.0 540.5 L496.0 541.5 L497.0 542.5 L498.0 543.5 L499.0 544.5 L500.0 544.5 L501.0 545.5 L502.0 546.5 L503.0 547.5 L504.0 547.5 L505.0 548.5 L506.0 549.5 L507.0 550.5 L508.0 551.5 L509.0 551.5 L510.0 552.5 L511.0 553.5 L512.0 554.5 L513.0 554.5 L514.0 555.5 L515.0 556.5 L516.0 557.5 L517.0 558.5 L518.0 558.5 L519.0 559.5 L520.0 560.5 L521.0 561.5 L522.0 562.5 L523.0 562.5 L524.0 563.5 L525.0 564.5 L526.0 565.5 L527.0 566.5 L528.0 566.5 L529.0 567.5 L530.0 568.5 L531.0 569.5 L532.0 569.5 L533.0 570.5 L534.0 571.5 L535.0 572.5 L536.0 573.5 L537.0 573.5 L538.0 574.5 L539.0 575.5 L540.0 576.5 L541.0 577.5 L542.0 577.5 L543.0 578.5 L544.0 579.5 L545.0 580.5 L546.0 581.5 L547.0 581.5 L548.0 582.5 L549.0 583.5 L550.0 584.5 L551.0 585.5 L552.0 585.5 L553.0 586.5 L554.0 587.5 L555.0 588.5 L556.0 589.5 L557.0 589.5 L558.0 590.5 L559.0 591.5 L560.0 592.5 L561.0 593.5 L562.0 593.5 L563.0 594.5 L564.0 595.5 L565.0 596.5 L566.0 597.5 L567.0 597.5 L568.0 598.5 L569.0 599.5 L570.0 600.5 L571.0 601.5 L572.0 601.5 L573.0 602.5 L574.0 603.5 L575.0 604.5 L576.0 605.5 L577.0 605.5 L578.0 606.5 L579.0 607.5 L580.0 608.5 L581.0 609.5 L582.0 609.5 L583.0 610.5 L584.0 611.5 L585.0 612.5 L586.0 613.5 L587.0 613.5 L588.0 614.5 L589.0 615.5 L590.0 616.5 L591.0 617.5 L592.0 617.5 L593.0 618.5 L594.0 619.5 L595.0 620.5 L596.0 621.5 L597.0 621.5 L598.0 622.5 L599.0 623.5 L600.0 624.5 L601.0 625.5 L602.0 625.5 L603.0 626.5 L604.0 627.5 L605.0 628.5 L606.0 629.5 L607.0 629.5 L608.0 630.5 L609.0 631.5 L610.0 632.5 L611.0 633.5 L612.0 634.5 L613.0 634.5 L614.0 635.5 L615.0 636.5 L616.0 637.5 L617.0 638.5 L618.0 638.5 L619.0 639.5 L620.0 640.5 L621.0 641.5 L622.0 642.5 L623.0 642.5 L624.0 643.5 L625.0 644.5 L626.0 645.5 L627.0 646.5 L628.0 646.5 L629.0 647.5 L630.0 648.5 L631.0 649.5 L632.0 650.5 L633.0 650.5 L634.0 651.5 L635.0 652.5 L636.0 653.5 L637.0 654.5 L638.0 654.5 L639.0 655.5 L640.0 656.5" fill="none" stroke="#0000ff" stroke-width="1" shape-rendering="crispEdges"/></svg>
<div style="position:absolute;left:2px;top:11px;width:34px;text-align:center;height:13px;line-height:13px;font-size:0"><span style="position:absolute;white-space:nowrap;font-size:11px;line-height:13px;height:13px;background:#191919;color:#fff;letter-spacing:-0.2px;padding:0 1px;position:static;display:inline-block;vertical-align:top">+15dB</span></div>
<div style="position:absolute;left:2px;top:33px;width:34px;text-align:center;height:13px;line-height:13px;font-size:0"><span style="position:absolute;white-space:nowrap;font-size:11px;line-height:13px;height:13px;background:#191919;color:#fff;letter-spacing:-0.2px;padding:0 1px;position:static;display:inline-block;vertical-align:top">+10dB</span></div>
<div style="position:absolute;left:2px;top:56px;width:34px;text-align:center;height:13px;line-height:13px;font-size:0"><span style="position:absolute;white-space:nowrap;font-size:11px;line-height:13px;height:13px;background:#191919;color:#fff;letter-spacing:-0.2px;padding:0 1px;position:static;display:inline-block;vertical-align:top">+5dB</span></div>
<div style="position:absolute;left:2px;top:79px;width:34px;text-align:center;height:13px;line-height:13px;font-size:0"><span style="position:absolute;white-space:nowrap;font-size:11px;line-height:13px;height:13px;background:#191919;color:#fff;letter-spacing:-0.2px;padding:0 1px;position:static;display:inline-block;vertical-align:top">0dB</span></div>
<div style="position:absolute;left:2px;top:102px;width:34px;text-align:center;height:13px;line-height:13px;font-size:0"><span style="position:absolute;white-space:nowrap;font-size:11px;line-height:13px;height:13px;background:#191919;color:#fff;letter-spacing:-0.2px;padding:0 1px;position:static;display:inline-block;vertical-align:top">-5dB</span></div>
<div style="position:absolute;left:2px;top:124px;width:34px;text-align:center;height:13px;line-height:13px;font-size:0"><span style="position:absolute;white-space:nowrap;font-size:11px;line-height:13px;height:13px;background:#191919;color:#fff;letter-spacing:-0.2px;padding:0 1px;position:static;display:inline-block;vertical-align:top">-10dB</span></div>
<div style="position:absolute;left:2px;top:147px;width:34px;text-align:center;height:13px;line-height:13px;font-size:0"><span style="position:absolute;white-space:nowrap;font-size:11px;line-height:13px;height:13px;background:#191919;color:#fff;letter-spacing:-0.2px;padding:0 1px;position:static;display:inline-block;vertical-align:top">-15dB</span></div>
<div style="position:absolute;left:2px;top:170px;width:34px;text-align:center;height:13px;line-height:13px;font-size:0"><span style="position:absolute;white-space:nowrap;font-size:11px;line-height:13px;height:13px;background:#191919;color:#fff;letter-spacing:-0.2px;padding:0 1px;position:static;display:inline-block;vertical-align:top">-20dB</span></div>
<div style="position:absolute;left:2px;top:193px;width:34px;text-align:center;height:13px;line-height:13px;font-size:0"><span style="position:absolute;white-space:nowrap;font-size:11px;line-height:13px;height:13px;background:#191919;color:#fff;letter-spacing:-0.2px;padding:0 1px;position:static;display:inline-block;vertical-align:top">-25dB</span></div>
<div style="position:absolute;left:2px;top:215px;width:34px;text-align:center;height:13px;line-height:13px;font-size:0"><span style="position:absolute;white-space:nowrap;font-size:11px;line-height:13px;height:13px;background:#191919;color:#fff;letter-spacing:-0.2px;padding:0 1px;position:static;display:inline-block;vertical-align:top">-30dB</span></div>
<div style="position:absolute;white-space:nowrap;font-size:11px;line-height:13px;height:13px;background:#191919;color:#fff;letter-spacing:-0.2px;padding:0 1px;letter-spacing:0.1px;left:71.5px;top:224px;transform:translateX(-50%)">10Hz</div>
<div style="position:absolute;white-space:nowrap;font-size:11px;line-height:13px;height:13px;background:#191919;color:#fff;letter-spacing:-0.2px;padding:0 1px;letter-spacing:0.1px;left:139.5px;top:224px;transform:translateX(-50%)">20Hz</div>
<div style="position:absolute;white-space:nowrap;font-size:11px;line-height:13px;height:13px;background:#191919;color:#fff;letter-spacing:-0.2px;padding:0 1px;letter-spacing:0.1px;left:229.4px;top:224px;transform:translateX(-50%)">50Hz</div>
<div style="position:absolute;white-space:nowrap;font-size:11px;line-height:13px;height:13px;background:#191919;color:#fff;letter-spacing:-0.2px;padding:0 1px;letter-spacing:0.1px;left:297.4px;top:224px;transform:translateX(-50%)">100Hz</div>
<div style="position:absolute;white-space:nowrap;font-size:11px;line-height:13px;height:13px;background:#191919;color:#fff;letter-spacing:-0.2px;padding:0 1px;letter-spacing:0.1px;left:365.5px;top:224px;transform:translateX(-50%)">200Hz</div>
<div style="position:absolute;white-space:nowrap;font-size:11px;line-height:13px;height:13px;background:#191919;color:#fff;letter-spacing:-0.2px;padding:0 1px;letter-spacing:0.1px;left:455.4px;top:224px;transform:translateX(-50%)">500Hz</div>
<div style="position:absolute;white-space:nowrap;font-size:11px;line-height:13px;height:13px;background:#191919;color:#fff;letter-spacing:-0.2px;padding:0 1px;letter-spacing:0.1px;left:523.4px;top:224px;transform:translateX(-50%)">1KHz</div>
<div style="position:absolute;white-space:nowrap;font-size:11px;line-height:13px;height:13px;background:#191919;color:#fff;letter-spacing:-0.2px;padding:0 1px;letter-spacing:0.1px;left:591.4px;top:224px;transform:translateX(-50%)">2KHz</div>
<div style="position:absolute;white-space:nowrap;font-size:11px;line-height:13px;height:13px;background:#191919;color:#fff;letter-spacing:-0.2px;padding:0 1px;letter-spacing:0.1px;left:681.3px;top:224px;transform:translateX(-50%)">5KHz</div>
<div style="position:absolute;white-space:nowrap;font-size:11px;line-height:13px;height:13px;background:#191919;color:#fff;letter-spacing:-0.2px;padding:0 1px;letter-spacing:0.1px;left:749.3px;top:224px;transform:translateX(-50%)">10KHz</div>
<div style="position:absolute;white-space:nowrap;font-size:11px;line-height:13px;height:13px;background:#191919;color:#fff;letter-spacing:-0.2px;padding:0 1px;letter-spacing:0.1px;left:817.4px;top:224px;transform:translateX(-50%)">20KHz</div>
</div>
<div class="t" style="left:31px;top:643px;height:14px;line-height:15px;background:#0c1e30;color:#fff8e0;font-size:11.5px;letter-spacing:-0.3px;padding:0 1px 0 0">Display:</div>
<div class="a" style="left:74px;top:642px;width:74px;height:18px;background:linear-gradient(180deg,#4fa8ff 0,#3594fb 50%,#1c7ee8 100%);border:1px solid #74b0ee;border-radius:1.5px;box-shadow:0 0 0 1px #0e0e0e;color:#fff;font-size:13.8px;line-height:18px;text-align:center;letter-spacing:-0.3px">Amplitude</div>
<div class="a" style="left:154px;top:642px;width:74px;height:18px;background:linear-gradient(180deg,#183c66 0,#0e2644 45%,#02060c 100%);border:1px solid #7c7c7c;border-radius:1.5px;box-shadow:0 0 0 1px #0e0e0e;color:#fff;font-size:13.8px;line-height:18px;text-align:center;letter-spacing:-0.3px">Phase</div>
<div class="a" style="left:742px;top:642px;width:74px;height:18px;background:linear-gradient(180deg,#183c66 0,#0e2644 45%,#02060c 100%);border:1px solid #7c7c7c;border-radius:1.5px;box-shadow:0 0 0 1px #0e0e0e;color:#fff;font-size:13.8px;line-height:18px;text-align:center;letter-spacing:-0.3px">Reset EQ</div>
<div class="a" style="left:822px;top:642px;width:78px;height:18px;background:linear-gradient(180deg,#183c66 0,#0e2644 45%,#02060c 100%);border:1px solid #7c7c7c;border-radius:1.5px;box-shadow:0 0 0 1px #0e0e0e;color:#fff;font-size:13.8px;line-height:18px;text-align:center;letter-spacing:-0.3px">EQ Bypass</div>
<div class="a" style="left:16px;top:670px;width:898px;height:37px;background:#1c1c1c;border:1px solid #d0d0d0;border-radius:4px"></div>
<div class="t" style="left:583px;top:682px;font-size:13px;color:#fff;letter-spacing:-0.1px">Output Link:</div>
<div class="a" style="left:661px;top:680px;width:57px;height:19px;background:#f0f0f0;border:1px solid;border-color:#fff #696969 #696969 #fff;box-shadow:inset -1px -1px 0 #a0a0a0;color:#000;font-size:11px;line-height:17px;padding-left:5px">Out L</div>
<div class="a" style="left:721px;top:680px;width:57px;height:19px;background:#f0f0f0;border:1px solid;border-color:#fff #696969 #696969 #fff;box-shadow:inset -1px -1px 0 #a0a0a0;color:#000;font-size:11px;line-height:17px;padding-left:5px">Out R</div></body></html>
